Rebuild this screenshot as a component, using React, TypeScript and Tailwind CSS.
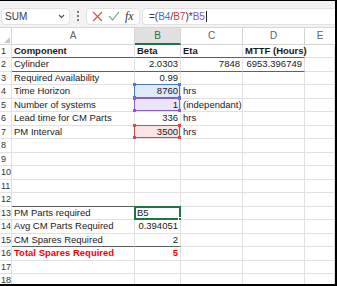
import React from 'react'

type Hl = 'blue' | 'purple' | 'red' | 'sel'
type Cell = { t?: string; r?: boolean; b?: boolean; red?: boolean; hl?: Hl }
type RowSpec = { n: number; cells: Cell[]; line?: number }

const widths = ['w-[123px]', 'w-[46px]', 'w-[62px]', 'w-[62px]', 'flex-1']

const hlStyles: Record<Hl, { bg: string; bd: string; sq: string }> = {
  blue: { bg: 'bg-[#dfe9f8]', bd: 'border-[#4a7bd0]', sq: 'bg-[#4a7bd0]' },
  purple: { bg: 'bg-[#ece5f7]', bd: 'border-[#8a5ccc]', sq: 'bg-[#8a5ccc]' },
  red: { bg: 'bg-[#fbe4e4]', bd: 'border-[#d24a4a]', sq: 'bg-[#d24a4a]' },
  sel: { bg: 'bg-white', bd: 'border-[#217346]', sq: 'bg-[#217346]' },
}

const rows: RowSpec[] = [
  { n: 1, line: 4, cells: [{ t: 'Component', b: true }, { t: 'Beta', b: true }, { t: 'Eta', b: true }, { t: 'MTTF (Hours)', b: true }] },
  { n: 2, line: 4, cells: [{ t: 'Cylinder' }, { t: '2.0303', r: true }, { t: '7848', r: true }, { t: '6953.396749', r: true }] },
  { n: 3, cells: [{ t: 'Required Availability' }, { t: '0.99', r: true }] },
  { n: 4, cells: [{ t: 'Time Horizon' }, { t: '8760', r: true, hl: 'blue' }, { t: 'hrs' }] },
  { n: 5, cells: [{ t: 'Number of systems' }, { t: '1', r: true, hl: 'purple' }, { t: '(independant)' }] },
  { n: 6, cells: [{ t: 'Lead time for CM Parts' }, { t: '336', r: true }, { t: 'hrs' }] },
  { n: 7, cells: [{ t: 'PM Interval' }, { t: '3500', r: true, hl: 'red' }, { t: 'hrs' }] },
  { n: 8, cells: [] },
  { n: 9, cells: [] },
  { n: 10, cells: [] },
  { n: 11, cells: [] },
  { n: 12, line: 2, cells: [] },
  { n: 13, cells: [{ t: 'PM Parts required' }, { t: 'B5', hl: 'sel' }] },
  { n: 14, cells: [{ t: 'Avg CM Parts Required' }, { t: '0.394051', r: true }] },
  { n: 15, line: 2, cells: [{ t: 'CM Spares Required' }, { t: '2', r: true }] },
  { n: 16, cells: [{ t: 'Total Spares Required', b: true, red: true }, { t: '5', r: true, b: true, red: true }] },
  { n: 17, cells: [] },
  { n: 18, cells: [] },
]

function Marker({ hl }: { hl: Hl }) {
  const s = hlStyles[hl]
  if (hl === 'sel') {
    return (
      <div className={`absolute -left-px -top-px -right-px -bottom-px border-2 ${s.bd}`}>
        <div className={`absolute -right-[3px] -bottom-[3px] w-[4px] h-[4px] ${s.sq} border border-white`} />
      </div>
    )
  }
  return (
    <div className={`absolute -left-px -top-px right-0 bottom-0 border ${s.bd}`}>
      <div className={`absolute -left-[2px] -top-[2px] w-[3px] h-[3px] ${s.sq}`} />
      <div className={`absolute -right-[2px] -top-[2px] w-[3px] h-[3px] ${s.sq}`} />
      <div className={`absolute -left-[2px] -bottom-[2px] w-[3px] h-[3px] ${s.sq}`} />
      <div className={`absolute -right-[2px] -bottom-[2px] w-[3px] h-[3px] ${s.sq}`} />
    </div>
  )
}

function SheetRow({ row }: { row: RowSpec }) {
  return (
    <div className="flex h-[13.5px] shrink-0">
      <div className="w-[12px] shrink-0 border-r border-b border-[#e1e1e1] text-[9px] leading-[13px] text-[#333] pl-[1px] overflow-hidden">{row.n}</div>
      {widths.map((w, i) => {
        const c = row.cells[i] || {}
        const dark = row.line && i < row.line
        const hl = c.hl ? hlStyles[c.hl] : null
        return (
          <div
            key={i}
            className={`${w} shrink-0 relative border-r border-b ${dark ? 'border-b-[#5f5f5f]' : 'border-b-[#e1e1e1]'} border-r-[#e1e1e1] ${hl ? hl.bg : ''} px-[2px] leading-[12.5px] whitespace-nowrap ${c.r ? 'text-right' : 'text-left'} ${c.b ? 'font-bold' : ''} ${c.red ? 'text-[#ff0000]' : 'text-[#1a1a1a]'}`}
          >
            {c.t}
            {c.hl && <Marker hl={c.hl} />}
          </div>
        )
      })}
    </div>
  )
}

export default function App() {
  return (
    <div className="w-[337px] h-[286px] bg-white border-t border-t-black border-r-2 border-b-2 border-black flex flex-col overflow-hidden font-['Liberation_Sans',Arial,sans-serif] text-[9.5px]">
      {/* formula bar */}
      <div className="h-[27px] shrink-0 bg-[#f3f3f3] border-b border-[#d6d6d6] flex items-center pt-[4px]">
        <div className="ml-[1px] w-[69px] h-[17px] bg-white border border-[#e2e2e2] rounded-[4px] flex items-center justify-between pl-[3px] pr-[4px]">
          <span className="text-[10px] text-[#3b3b3b]">SUM</span>
          <svg width="7" height="5" viewBox="0 0 7 5"><path d="M1 1l2.5 2.5L6 1" fill="none" stroke="#555" strokeWidth="1.2" /></svg>
        </div>
        <div className="w-[16px] flex flex-col items-center gap-[2px]">
          <div className="w-[2px] h-[2px] bg-[#555] rounded-full" />
          <div className="w-[2px] h-[2px] bg-[#555] rounded-full" />
          <div className="w-[2px] h-[2px] bg-[#555] rounded-full" />
        </div>
        <div className="w-[54px] h-[17px] bg-white border border-[#e2e2e2] rounded-[4px] flex items-center justify-around px-[3px]">
          <svg width="11" height="11" viewBox="0 0 11 11"><path d="M1 1l9 9M10 1l-9 9" stroke="#e04a3f" strokeWidth="1.1" /></svg>
          <svg width="12" height="10" viewBox="0 0 12 10"><path d="M1 5l3.5 4L11 1" fill="none" stroke="#4aa862" strokeWidth="1.1" /></svg>
          <span className="font-['Liberation_Serif',serif] italic text-[12px] text-[#333] leading-none">fx</span>
        </div>
        <div className="ml-[2px] flex-1 h-[17px] bg-white border border-r-0 border-[#e2e2e2] rounded-l-[4px] flex items-center pl-[6px] text-[10px] text-[#333]">
          <span>=(</span>
          <span className="text-[#3f74cf]">B4</span>
          <span>/</span>
          <span className="text-[#d23f3f]">B7</span>
          <span>)*</span>
          <span className="text-[#8a55c8]">B5</span>
          <span className="w-px h-[11px] bg-[#222] ml-[1px]" />
        </div>
      </div>
      {/* column headers */}
      <div className="flex h-[16.5px] shrink-0 text-[10px] text-[#616161] bg-white">
        <div className="w-[12px] shrink-0 border-r border-b border-[#d4d4d4] relative">
          <div className="absolute right-[1px] bottom-[1px] w-0 h-0 border-l-[6px] border-l-transparent border-b-[6px] border-b-[#c6c6c6]" />
        </div>
        <div className="w-[123px] shrink-0 border-r border-b border-[#d4d4d4] flex items-center justify-center">A</div>
        <div className="w-[46px] shrink-0 border-r border-[#d4d4d4] border-b-2 border-b-[#217346] bg-[#e1e1e1] text-[#217346] flex items-center justify-center">B</div>
        <div className="w-[62px] shrink-0 border-r border-b border-[#d4d4d4] flex items-center justify-center">C</div>
        <div className="w-[62px] shrink-0 border-r border-b border-[#d4d4d4] flex items-center justify-center">D</div>
        <div className="flex-1 border-b border-[#d4d4d4] flex items-center justify-center">E</div>
      </div>
      {rows.map((r) => (
        <SheetRow key={r.n} row={r} />
      ))}
    </div>
  )
}
